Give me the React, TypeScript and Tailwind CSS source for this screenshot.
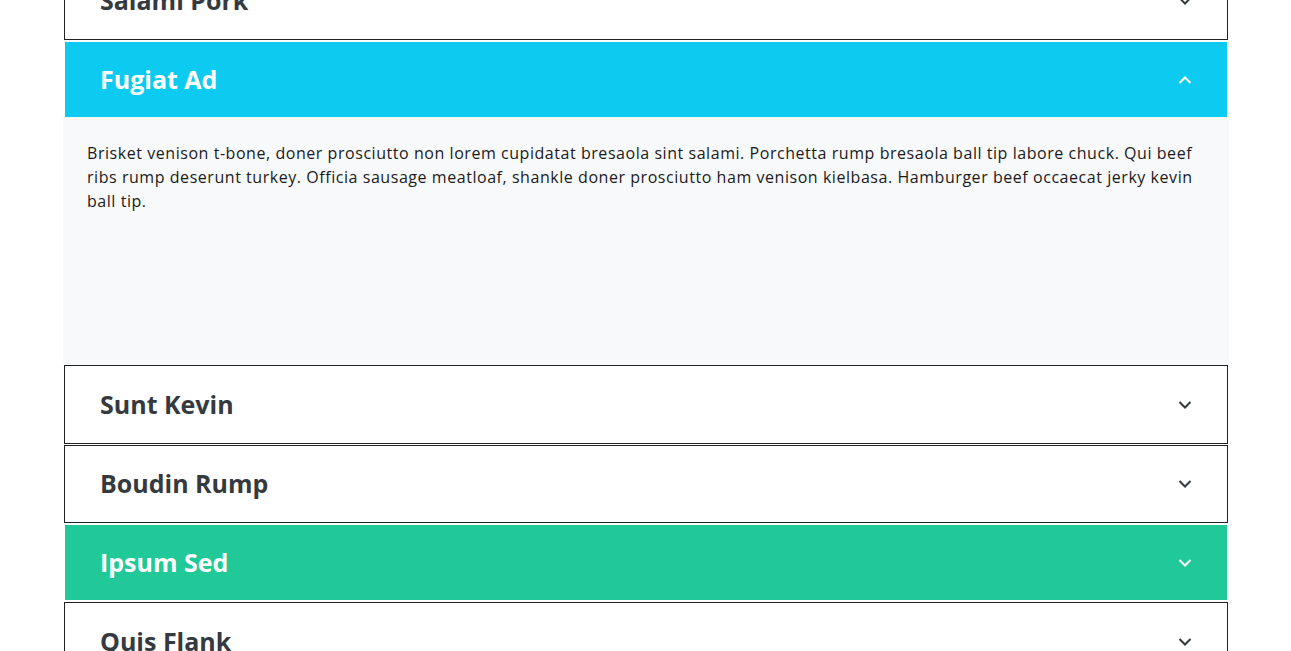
import React, { useState } from "react";

type Item = {
  title: string;
  body?: string;
  color?: "cyan" | "teal";
  h: string;
  mb: string;
};

const items: Item[] = [
  { title: "Salami Pork", h: "h-[79px]", mb: "mb-[2px]" },
  {
    title: "Fugiat Ad",
    color: "cyan",
    h: "h-[75px]",
    mb: "mb-0",
    body: "Brisket venison t-bone, doner prosciutto non lorem cupidatat bresaola sint salami. Porchetta rump bresaola ball tip labore chuck. Qui beef ribs rump deserunt turkey. Officia sausage meatloaf, shankle doner prosciutto ham venison kielbasa. Hamburger beef occaecat jerky kevin ball tip.",
  },
  { title: "Sunt Kevin", h: "h-[79px]", mb: "mb-px" },
  { title: "Boudin Rump", h: "h-[78px]", mb: "mb-[2px]" },
  { title: "Ipsum Sed", color: "teal", h: "h-[75px]", mb: "mb-[2px]" },
  { title: "Quis Flank", h: "h-[79px]", mb: "mb-[2px]" },
];

function Chevron({ up }: { up?: boolean }) {
  return (
    <svg width="14" height="8" viewBox="0 0 14 8" fill="none" className="shrink-0">
      <polyline
        points={up ? "1.5,7 7,1.5 12.5,7" : "1.5,1 7,6.5 12.5,1"}
        stroke="currentColor"
        strokeWidth="2"
      />
    </svg>
  );
}

export default function App() {
  const [open, setOpen] = useState<number>(1);

  return (
    <div className="min-h-screen bg-white font-['Open_Sans',sans-serif] overflow-hidden">
      <div className="mx-[64px] w-[1164px] -mt-[39px] flex flex-col">
        {items.map((it, i) => {
          const isOpen = open === i;
          const colored = it.color === "cyan" ? "bg-[#0dcaf0] text-white" : it.color === "teal" ? "bg-[#20c997] text-white" : "";
          return (
            <div key={it.title} className={it.mb}>
              <button
                onClick={() => setOpen(isOpen ? -1 : i)}
                className={
                  it.color
                    ? `w-[1162px] mx-px ${it.h} flex items-center justify-between pl-[35px] pr-[35px] ${colored}`
                    : `w-full ${it.h} flex items-center justify-between pl-[35px] pr-[35px] border border-[#222] bg-white text-[#343a40]`
                }
              >
                <span className="text-[25px] font-bold">{it.title}</span>
                <span className={it.color ? "text-white" : "text-[#343a40]"}>
                  <Chevron up={isOpen} />
                </span>
              </button>
              {isOpen && it.body && (
                <div className="-mx-px w-[1166px] h-[248px] bg-[#f8f9fa] px-[24px] py-6 text-[16px] tracking-[0.55px] leading-6 text-[#1a1a1a]">
                  {it.body}
                </div>
              )}
            </div>
          );
        })}
      </div>
    </div>
  );
}
